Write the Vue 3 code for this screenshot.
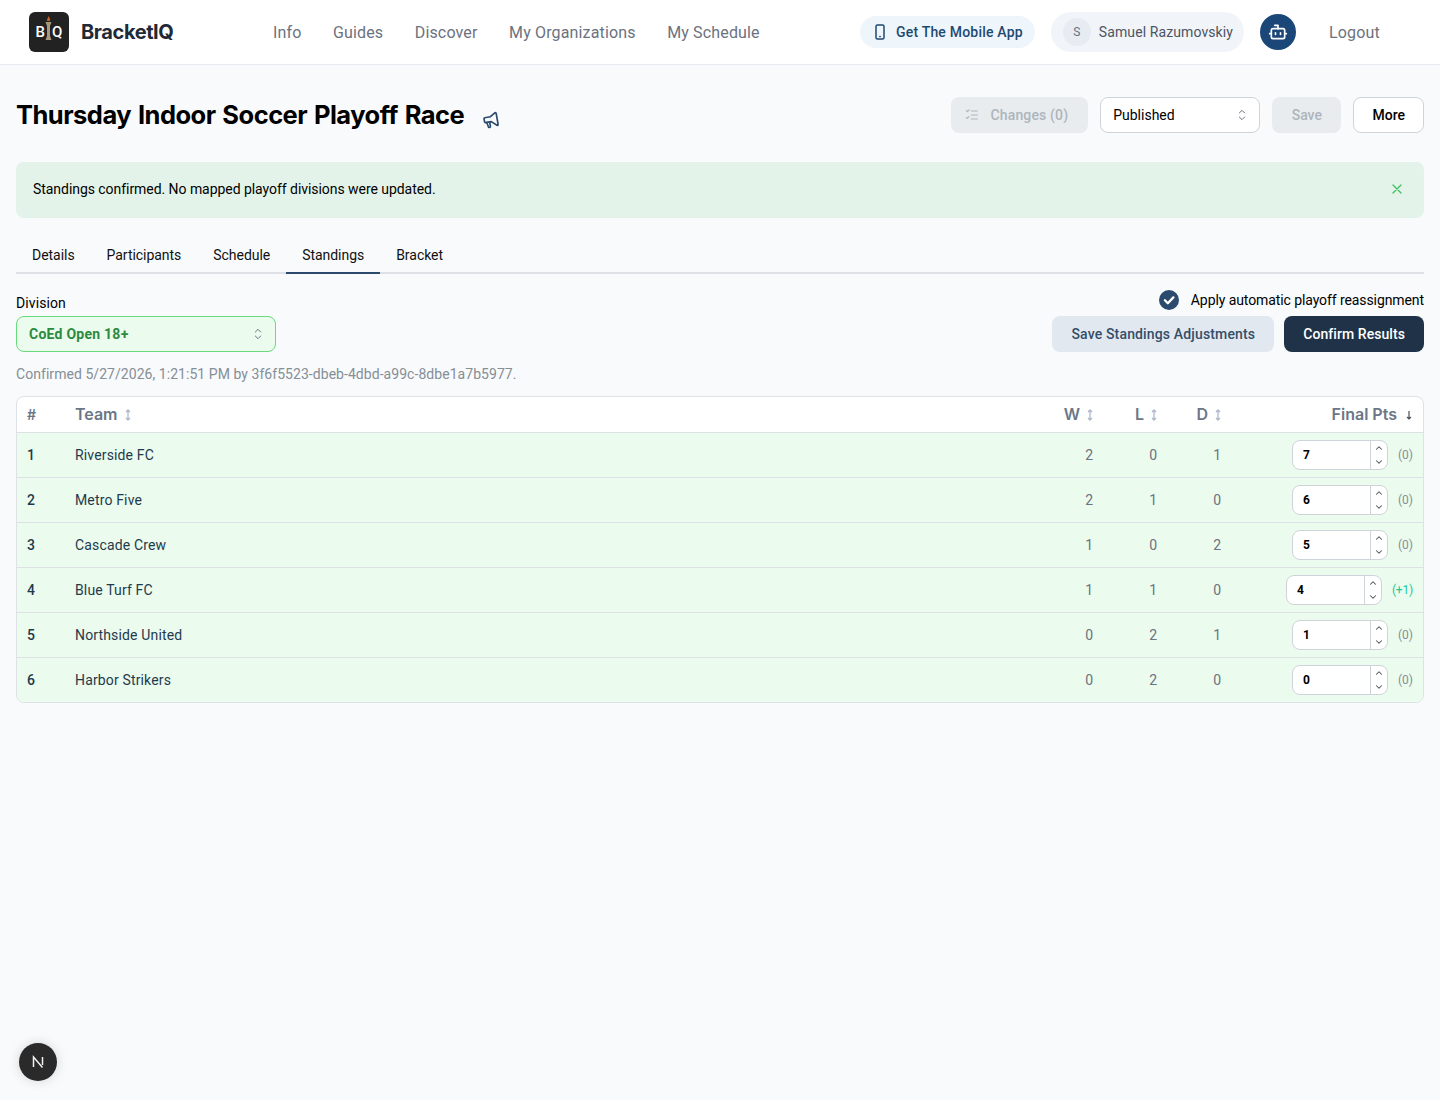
<script setup>
const navLinks = ['Info', 'Guides', 'Discover', 'My Organizations', 'My Schedule'];
const tabs = ['Details', 'Participants', 'Schedule', 'Standings', 'Bracket'];

const teams = [
    { rank: 1, name: 'Riverside FC', w: 2, l: 0, d: 1, pts: 7, diff: '(0)' },
    { rank: 2, name: 'Metro Five', w: 2, l: 1, d: 0, pts: 6, diff: '(0)' },
    { rank: 3, name: 'Cascade Crew', w: 1, l: 0, d: 2, pts: 5, diff: '(0)' },
    { rank: 4, name: 'Blue Turf FC', w: 1, l: 1, d: 0, pts: 4, diff: '(+1)' },
    { rank: 5, name: 'Northside United', w: 0, l: 2, d: 1, pts: 1, diff: '(0)' },
    { rank: 6, name: 'Harbor Strikers', w: 0, l: 2, d: 0, pts: 0, diff: '(0)' },
];
</script>

<template>
    <header class="topbar">
        <div class="brand">
            <div class="logo">
                <span>B</span>
                <svg class="torch" width="9" height="27" viewBox="0 0 9 27">
                    <path d="M4.5 0 C5.5 2 6.5 3 5.8 5 H3.2 C2.5 3.5 3.8 2.5 4.5 0Z" fill="#c8642a" />
                    <path d="M1.5 6 H7.5 L6 10 V20 L7.5 24 H1.5 L3 20 V10Z" fill="#a89a78" />
                </svg>
                <span>Q</span>
            </div>
            <span class="brand-name">BracketIQ</span>
        </div>
        <nav class="nav">
            <a v-for="link in navLinks" :key="link">{{ link }}</a>
        </nav>
        <div class="top-right">
            <div class="mobile-pill">
                <svg width="10" height="16" viewBox="0 0 10 16" fill="none" stroke="currentColor" stroke-width="1.500" stroke-linecap="round" stroke-linejoin="round">
                    <rect x="1" y="1" width="8" height="14" rx="1.500" />
                    <path d="M4.800 12.500h.4" />
                </svg>
                Get The Mobile App
            </div>
            <div class="user-pill">
                <span class="avatar">S</span>
                Samuel Razumovskiy
            </div>
            <div class="bot">
                <svg width="20" height="20" viewBox="0 0 24 24" fill="none" stroke="#fff" stroke-width="2" stroke-linecap="round" stroke-linejoin="round">
                    <path d="M12 8V4H8" />
                    <rect x="4" y="8" width="16" height="12" rx="2" />
                    <path d="M2 14h2M20 14h2M15 13v2M9 13v2" />
                </svg>
            </div>
            <a class="logout">Logout</a>
        </div>
    </header>

    <main class="page">
        <div class="title-row">
            <div class="title-left">
                <h1>Thursday Indoor Soccer Playoff Race</h1>
                <svg class="megaphone" width="20" height="20" viewBox="0 0 24 24" fill="none" stroke="#2c4a6e" stroke-width="2" stroke-linecap="round" stroke-linejoin="round">
                    <g transform="rotate(-10 12 12)">
                        <path d="M10 14v5.500a1 1 0 0 1-1 1H8.500a1 1 0 0 1-1-1L6.500 14" />
                        <path d="M12 8l6-3.500a.9.9 0 0 1 1.500.700v13.600a.9.9 0 0 1-1.500.700L12 14H5a1 1 0 0 1-1-1V9a1 1 0 0 1 1-1h7" />
                    </g>
                </svg>
            </div>
            <div class="actions">
                <button class="btn disabled changes">
                    <svg width="16" height="16" viewBox="0 0 24 24" fill="none" stroke="currentColor" stroke-width="1.800" stroke-linecap="round" stroke-linejoin="round">
                        <path d="M3.500 5.500l1.500 1.500 2.500-2.500M3.500 15.500l1.500 1.500 2.500-2.500M11 6h9M11 12h9M11 18h9" />
                    </svg>
                    Changes (0)
                </button>
                <div class="select status">
                    Published
                    <svg class="updown" width="16" height="16" viewBox="0 0 24 24" fill="none" stroke="#6b7280" stroke-width="1.500" stroke-linecap="round" stroke-linejoin="round">
                        <path d="M8 9l4-4 4 4M8 15l4 4 4-4" />
                    </svg>
                </div>
                <button class="btn disabled save">Save</button>
                <button class="btn more">More</button>
            </div>
        </div>

        <div class="alert">
            <span>Standings confirmed. No mapped playoff divisions were updated.</span>
            <svg width="16" height="16" viewBox="0 0 24 24" fill="none" stroke="#40c463" stroke-width="2" stroke-linecap="round">
                <path d="M6 6l12 12M18 6L6 18" />
            </svg>
        </div>

        <div class="tabs">
            <div v-for="tab in tabs" :key="tab" class="tab" :class="{ active: tab === 'Standings' }">{{ tab }}</div>
        </div>

        <div class="controls">
            <div class="division">
                <label>Division</label>
                <div class="select division-select">
                    CoEd Open 18+
                    <svg class="updown" width="16" height="16" viewBox="0 0 24 24" fill="none" stroke="#6b7280" stroke-width="1.500" stroke-linecap="round" stroke-linejoin="round">
                        <path d="M8 9l4-4 4 4M8 15l4 4 4-4" />
                    </svg>
                </div>
            </div>
            <div class="control-right">
                <div class="auto-check">
                    <span class="check">
                        <svg width="14" height="14" viewBox="0 0 24 24" fill="none" stroke="#fff" stroke-width="4" stroke-linecap="round" stroke-linejoin="round">
                            <path d="M5 12.500l5 5L19.500 7.500" />
                        </svg>
                    </span>
                    Apply automatic playoff reassignment
                </div>
                <div class="control-buttons">
                    <button class="btn light">Save Standings Adjustments</button>
                    <button class="btn dark">Confirm Results</button>
                </div>
            </div>
        </div>

        <p class="confirmed">Confirmed 5/27/2026, 1:21:51 PM by 3f6f5523-dbeb-4dbd-a99c-8dbe1a7b5977.</p>

        <div class="table-wrap">
            <table>
                <thead>
                    <tr>
                        <th class="col-rank">#</th>
                        <th class="col-team">Team<svg class="sort" width="8" height="12" viewBox="0 0 8 12" fill="none" stroke="#adb9c9" stroke-width="1.300"><path d="M4 1v10M2 3l2-2 2 2M2 9l2 2 2-2" /></svg></th>
                        <th class="col-w num">W<svg class="sort" width="8" height="12" viewBox="0 0 8 12" fill="none" stroke="#adb9c9" stroke-width="1.300"><path d="M4 1v10M2 3l2-2 2 2M2 9l2 2 2-2" /></svg></th>
                        <th class="col-l num">L<svg class="sort" width="8" height="12" viewBox="0 0 8 12" fill="none" stroke="#adb9c9" stroke-width="1.300"><path d="M4 1v10M2 3l2-2 2 2M2 9l2 2 2-2" /></svg></th>
                        <th class="col-d num">D<svg class="sort" width="8" height="12" viewBox="0 0 8 12" fill="none" stroke="#adb9c9" stroke-width="1.300"><path d="M4 1v10M2 3l2-2 2 2M2 9l2 2 2-2" /></svg></th>
                        <th class="col-pts">Final Pts<svg class="sort down" width="8" height="10" viewBox="0 0 8 10" fill="none" stroke="#495057" stroke-width="1.200"><path d="M4 1v8M2 7l2 2 2-2" /></svg></th>
                    </tr>
                </thead>
                <tbody>
                    <tr v-for="team in teams" :key="team.rank">
                        <td class="rank">{{ team.rank }}</td>
                        <td class="team">{{ team.name }}</td>
                        <td class="stat">{{ team.w }}</td>
                        <td class="stat">{{ team.l }}</td>
                        <td class="stat">{{ team.d }}</td>
                        <td>
                            <div class="pts-cell">
                                <div class="stepper">
                                    <span class="value">{{ team.pts }}</span>
                                    <span class="arrows">
                                        <svg width="10" height="10" viewBox="0 0 24 24" fill="none" stroke="#495057" stroke-width="2.500" stroke-linecap="round" stroke-linejoin="round"><path d="M6 15l6-6 6 6" /></svg>
                                        <svg width="10" height="10" viewBox="0 0 24 24" fill="none" stroke="#495057" stroke-width="2.500" stroke-linecap="round" stroke-linejoin="round"><path d="M6 9l6 6 6-6" /></svg>
                                    </span>
                                </div>
                                <span class="diff" :class="{ up: team.diff !== '(0)' }">{{ team.diff }}</span>
                            </div>
                        </td>
                    </tr>
                </tbody>
            </table>
        </div>
    </main>

    <div class="next-badge">
        <svg width="16" height="16" viewBox="0 0 16 16" fill="none" stroke="#f1f1f1" stroke-width="1.500">
            <path d="M3.500 13V3L12.500 13.500M12.500 3v8" />
        </svg>
    </div>
</template>

<style>
body {
    background-color: #f8fafc;
}
</style>

<style scoped>
.topbar {
    display: flex;
    align-items: center;
    height: 64px;
    background-color: #fff;
    border-bottom: 1px solid #e5eaf1;
    padding-left: 29px;
    font-family: Roboto, sans-serif;
}

.brand {
    display: flex;
    align-items: center;
    gap: 12px;
    width: 244px;
}

.logo {
    width: 40px;
    height: 40px;
    border-radius: 6px;
    background-color: #222;
    color: #fff;
    display: flex;
    align-items: center;
    justify-content: center;
    font-size: 15px;
    font-weight: 500;
}

.torch {
    margin: -6px -1px 0;
}

.brand-name {
    font-family: Inter, sans-serif;
    font-size: 20px;
    font-weight: 700;
    letter-spacing: -0.4px;
    color: #1f2937;
}

.nav {
    display: flex;
    gap: 31.500px;
    font-size: 16px;
    letter-spacing: 0.15px;
    color: #6b7280;
    width: 587px;
}

.top-right {
    display: flex;
    align-items: center;
}

.mobile-pill {
    display: flex;
    align-items: center;
    gap: 11px;
    height: 32px;
    padding: 0 12px 0 15px;
    border-radius: 16px;
    background-color: #eef5fb;
    color: #1e4a72;
    font-size: 14px;
    font-weight: 500;
    letter-spacing: 0.2px;
    margin-right: 16px;
}

.user-pill {
    display: flex;
    align-items: center;
    gap: 8px;
    height: 40px;
    padding: 0 11px 0 12px;
    border-radius: 20px;
    background-color: #f1f4f8;
    color: #4b5563;
    font-size: 14px;
    letter-spacing: 0.1px;
    margin-right: 16px;
}

.avatar {
    width: 28px;
    height: 28px;
    border-radius: 50%;
    background-color: #e7ebf2;
    color: #6b7280;
    font-size: 12px;
    display: flex;
    align-items: center;
    justify-content: center;
}

.bot {
    width: 36px;
    height: 36px;
    border-radius: 50%;
    background-color: #1a4778;
    display: flex;
    align-items: center;
    justify-content: center;
    margin-right: 33px;
}

.logout {
    font-size: 16px;
    letter-spacing: 0.15px;
    color: #6b7280;
}

.page {
    padding: 0 16px;
    font-family: Roboto, sans-serif;
    color: #000;
}

.title-row {
    display: flex;
    justify-content: space-between;
    align-items: center;
    padding-top: 32px;
    height: 36px;
}

.title-left {
    display: flex;
    align-items: center;
}

h1 {
    margin: 0;
    font-family: Inter, sans-serif;
    font-size: 25.500px;
    font-weight: 700;
    letter-spacing: -0.52px;
    word-spacing: 1.300px;
    line-height: 36px;
}

.megaphone {
    margin: 9px 0 0 17px;
}

.actions {
    display: flex;
    gap: 12px;
    align-items: center;
}

.btn {
    height: 36px;
    border: none;
    border-radius: 8px;
    font-family: Roboto, sans-serif;
    font-size: 14px;
    font-weight: 500;
    padding: 0 19px;
    display: flex;
    align-items: center;
}

.disabled {
    background-color: #e9ecef;
    color: #adb5bd;
}

.changes {
    gap: 10px;
    padding: 0 20px 0 13px;
    letter-spacing: 0.15px;
}

.save {
    padding: 0 19.500px;
}

.more {
    background-color: #fff;
    border: 1px solid #ced4da;
    color: #000;
    padding: 0 18px;
}

.select {
    height: 36px;
    box-sizing: border-box;
    border: 1px solid #ced4da;
    border-radius: 8px;
    background-color: #fff;
    font-size: 14px;
    padding: 0 9px 0 12px;
    display: flex;
    align-items: center;
    justify-content: space-between;
}

.status {
    width: 160px;
}

.alert {
    margin-top: 29px;
    height: 56px;
    box-sizing: border-box;
    background-color: #e4f3e9;
    border-radius: 8px;
    display: flex;
    align-items: center;
    justify-content: space-between;
    padding: 0 19px 2px 17px;
    font-size: 14px;
    letter-spacing: -0.05px;
}

.tabs {
    display: flex;
    margin-top: 20px;
    border-bottom: 2px solid #dee2e6;
}

.tab {
    height: 34px;
    padding: 0 16px;
    font-size: 14px;
    letter-spacing: -0.04px;
    display: flex;
    align-items: center;
    margin-bottom: -2px;
    border-bottom: 2px solid transparent;
    color: #111;
}

.tab.active {
    border-bottom-color: #2c4a6e;
}

.controls {
    display: flex;
    justify-content: space-between;
    align-items: flex-end;
    margin-top: 16px;
}

.division label {
    display: block;
    font-size: 14px;
    font-weight: 400;
    letter-spacing: 0.1px;
    line-height: 20px;
    margin-bottom: 3px;
}

.division {
    font-size: 14px;
}

.division-select {
    width: 260px;
    background-color: #ebfbee;
    border-color: #69db7c;
    color: #2b8a3e;
    font-weight: 700;
    letter-spacing: 0.25px;
}

.control-right {
    display: flex;
    flex-direction: column;
    align-items: flex-end;
    gap: 6px;
}

.auto-check {
    display: flex;
    align-items: center;
    gap: 12px;
    font-size: 14px;
    letter-spacing: -0.09px;
    line-height: 20px;
}

.check {
    width: 20px;
    height: 20px;
    border-radius: 50%;
    background-color: #2c4a6e;
    display: flex;
    align-items: center;
    justify-content: center;
}

.control-buttons {
    display: flex;
    gap: 10px;
}

.light {
    background-color: #e2e8f0;
    color: #334e68;
    letter-spacing: 0.15px;
}

.dark {
    background-color: #1f3247;
    color: #fff;
    letter-spacing: 0.07px;
}

.confirmed {
    margin: 14px 0 14px;
    font-size: 14px;
    letter-spacing: 0.05px;
    line-height: 16px;
    color: #868e96;
}

.table-wrap {
    border: 1px solid #dee2e6;
    border-radius: 8px;
    overflow: hidden;
    background-color: #fff;
}

table {
    width: 100%;
    border-collapse: collapse;
    table-layout: fixed;
}

th {
    height: 35px;
    padding: 0;
    font-family: Inter, sans-serif;
    font-size: 16px;
    font-weight: 600;
    line-height: 35px;
    vertical-align: top;
    color: #6b7686;
    text-align: left;
}

.col-rank {
    width: 48px;
    padding-left: 10px;
    font-size: 14px;
}

.col-w {
    width: 96px;
}

.col-l {
    width: 64px;
}

.col-d {
    width: 64px;
}

.col-pts {
    width: 192px;
    text-align: right;
    padding-right: 10px;
}

.num {
    text-align: right;
    padding-right: 0;
}

.sort {
    margin-left: 6px;
    vertical-align: -1px;
}

.num .sort {
    margin-right: -1px;
}

.sort.down {
    margin-left: 8px;
    vertical-align: 0;
}

tbody tr {
    height: 45px;
    background-color: #ebfbee;
    border-top: 1px solid #dee2e6;
}

tbody tr:last-child {
    height: 44px;
}

td {
    padding: 0;
    font-size: 14px;
}

.rank {
    padding-left: 10px;
    font-weight: 500;
    color: #1f3a4d;
}

.team {
    letter-spacing: 0.15px;
    color: #1f3a4d;
}

.stat {
    text-align: right;
    color: #6b7280;
}

.pts-cell {
    display: flex;
    justify-content: flex-end;
    align-items: center;
    gap: 10px;
    padding-right: 10px;
}

.stepper {
    width: 96px;
    height: 30px;
    box-sizing: border-box;
    border: 1px solid #ced4da;
    border-radius: 8px;
    background-color: #fff;
    display: flex;
    align-items: center;
    justify-content: space-between;
    overflow: hidden;
}

.value {
    padding-left: 10px;
    font-size: 12px;
    font-weight: 700;
}

.arrows {
    width: 16px;
    height: 100%;
    border-left: 1px solid #ced4da;
    display: flex;
    flex-direction: column;
    align-items: center;
    justify-content: space-around;
}

.diff {
    font-size: 12px;
    color: #868e96;
}

.diff.up {
    color: #20c997;
    letter-spacing: -0.2px;
}

.next-badge {
    position: fixed;
    left: 19px;
    bottom: 19px;
    width: 38px;
    height: 38px;
    border-radius: 50%;
    background-color: #2a2a2a;
    box-shadow: 0 0 12px rgba(0, 0, 0, 0.15);
    display: flex;
    align-items: center;
    justify-content: center;
}
</style>
